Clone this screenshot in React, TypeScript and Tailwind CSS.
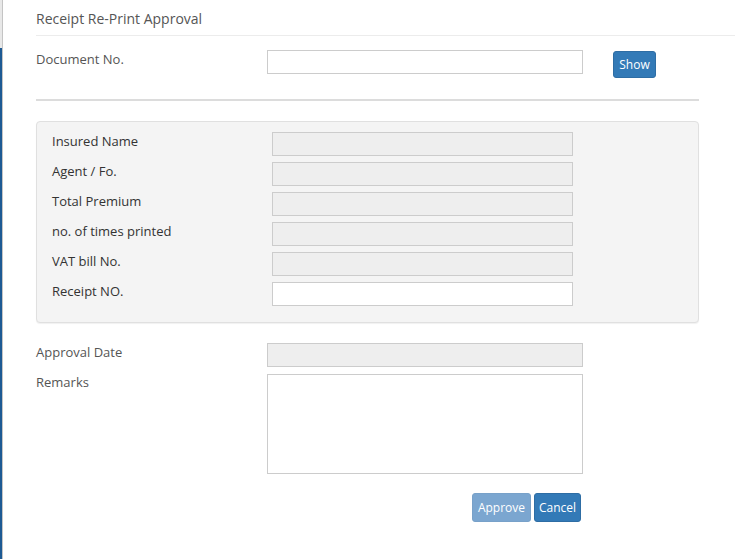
import React from 'react';

const PANEL_FIELDS = [
  { label: 'Insured Name', disabled: true },
  { label: 'Agent / Fo.', disabled: true },
  { label: 'Total Premium', disabled: true },
  { label: 'no. of times printed', disabled: true },
  { label: 'VAT bill No.', disabled: true },
  { label: 'Receipt NO.', disabled: false },
];

export default function App() {
  return (
    <div className="flex w-[735px] h-[559px] bg-white overflow-hidden" style={{ fontFamily: '"Open Sans", "Liberation Sans", sans-serif' }}>
      {/* left frame edge */}
      <div className="flex shrink-0">
        <div className="w-[2px] flex flex-col">
          <div className="h-[48px] bg-[#e8e8e8]"></div>
          <div className="flex-1 bg-[#1d5a94]"></div>
        </div>
        <div className="w-[1px] bg-[#c4c4c4]"></div>
      </div>

      <div className="flex-1 pl-[33px]">
        <div className="h-[36px] border-b border-[#ececec] pt-[9px] text-[14px] leading-[20px] text-[#555]">
          Receipt Re-Print Approval
        </div>

        <div className="w-[663px]">
          <div className="flex items-start mt-[13px]">
            <div className="w-[231px] text-[13px] leading-[20px] text-[#555]">Document No.</div>
            <input className="w-[316px] h-[24px] mt-[1px] border border-[#ccc] bg-white outline-none" />
            <button className="ml-[30px] mt-[2px] h-[27px] w-[43px] rounded-[3px] bg-[#337ab7] border border-[#2e6da4] text-white text-[12px] leading-[18px]">
              Show
            </button>
          </div>

          <div className="mt-[21px] h-[2px] bg-[#dcdcdc]"></div>

          <div className="mt-[20px] bg-[#f4f4f4] border border-[#e0e0e0] rounded-[4px] shadow-[0_1px_1px_rgba(0,0,0,0.06)] pl-[15px] pt-[10px] pb-[16px] flex flex-col gap-[6px]">
            {PANEL_FIELDS.map(f => (
              <div key={f.label} className="flex items-start">
                <div className="w-[220px] -mt-[1px] text-[13px] leading-[20px] text-[#333]">{f.label}</div>
                <input
                  disabled={f.disabled}
                  className={`w-[301px] h-[24px] border border-[#ccc] outline-none ${f.disabled ? 'bg-[#eee]' : 'bg-white'}`}
                />
              </div>
            ))}
          </div>

          <div className="flex items-start mt-[20px]">
            <div className="w-[231px] -mt-[1px] text-[13px] leading-[20px] text-[#555]">Approval Date</div>
            <input disabled className="w-[316px] h-[24px] border border-[#ccc] bg-[#eee] outline-none" />
          </div>

          <div className="flex items-start mt-[7px]">
            <div className="w-[231px] -mt-[2px] text-[13px] leading-[20px] text-[#555]">Remarks</div>
            <textarea className="w-[316px] h-[100px] border border-[#ccc] bg-white outline-none resize-none" />
          </div>

          <div className="w-[545px] flex justify-end gap-[3px] mt-[19px]">
            <button disabled className="h-[29px] w-[59px] rounded-[3px] bg-[#7ba6d0] border border-[#78a1c9] text-white text-[12px] leading-[18px]">
              Approve
            </button>
            <button className="h-[29px] w-[47px] rounded-[3px] bg-[#337ab7] border border-[#2e6da4] text-white text-[12px] leading-[18px]">
              Cancel
            </button>
          </div>
        </div>
      </div>
    </div>
  );
}
